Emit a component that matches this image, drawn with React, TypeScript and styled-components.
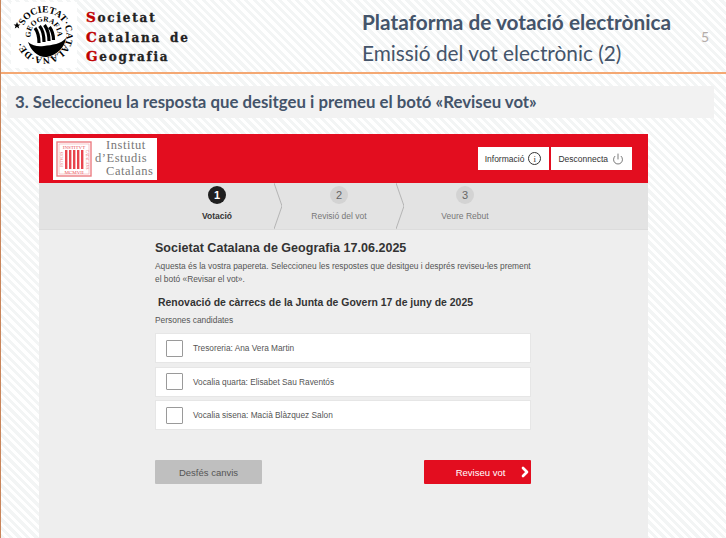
import React from 'react'
import styled, { createGlobalStyle } from 'styled-components'
import { Power, ChevronRight } from 'lucide-react'

const red = '#e30d1f'
const slate = '#44546a'

const GlobalStyle = createGlobalStyle`
    html, body {
        margin: 0;
        padding: 0;
        background: #fff;
    }
`

const Slide = styled.div`
    width: 726px;
    height: 538px;
    box-sizing: border-box;
    overflow: hidden;
    border-left: 1px solid #c9855a;
    background: repeating-linear-gradient(45deg, #f3f5f5 0, #f3f5f5 3px, #fff 3px, #fff 6px);
    font-family: 'Liberation Sans', Arial, sans-serif;
`

const Header = styled.header`
    display: flex;
    height: 74px;
    box-sizing: border-box;
    border-bottom: 2px solid #f4a873;
    padding: 2px 0 0 10px;
`

const Brand = styled.div`
    display: flex;
    width: 351px;
    flex: none;
`

const Emblem = styled.svg`
    width: 66px;
    height: 66px;
    flex: none;
    background: #fff;
`

const BrandName = styled.div`
    margin: 7px 0 0 9px;
    font-family: 'DejaVu Serif', serif;
    font-weight: 700;
    font-size: 12px;
    line-height: 19.5px;
    letter-spacing: 1.8px;
    word-spacing: 3px;
    color: #222;
    -webkit-text-stroke: 0.3px #222;

    b {
        color: #c00000;
        font-size: 13.5px;
        line-height: 0;
        -webkit-text-stroke: 0.4px #c00000;
    }
`

const Titles = styled.div`
    font-family: Lato, sans-serif;
    color: ${slate};
    padding-top: 6px;
    width: 339px;
    flex: none;
`

const MainTitle = styled.div`
    font-size: 20.8px;
    font-weight: 700;
    line-height: 27px;
`

const SubTitle = styled.div`
    margin-top: 3px;
    font-size: 20.8px;
    line-height: 30px;
`

const PageNumber = styled.div`
    font-family: Lato, sans-serif;
    font-size: 14px;
    line-height: 17px;
    color: #b3aca8;
    padding-top: 26px;
`

const Instruction = styled.div`
    margin: 12px 12px 0 6px;
    height: 32px;
    padding-left: 8px;
    background: #f2f2f2;
    font-family: Lato, sans-serif;
    font-weight: 700;
    font-size: 16.8px;
    line-height: 32px;
    color: ${slate};
`

const Shot = styled.section`
    margin: 16px 0 0 38px;
    width: 609px;
    height: 404px;
    background: #eee;
`

const TopBar = styled.div`
    display: flex;
    align-items: center;
    justify-content: space-between;
    height: 49px;
    padding: 0 16px 0 14px;
    background: ${red};
`

const Logo = styled.div`
    display: flex;
    align-items: center;
    width: 104px;
    height: 42px;
    box-sizing: border-box;
    padding-left: 3px;
    background: #fff;
`

const LogoText = styled.div`
    margin-left: 3px;
    font-family: 'Liberation Serif', serif;
    font-size: 12.5px;
    line-height: 13px;
    letter-spacing: 0.55px;
    color: #777;
`

const LogoLine = styled.div<{ $indent: number }>`
    padding-left: ${p => p.$indent}px;
`

const TopActions = styled.div`
    display: flex;
    gap: 2px;
`

const TopButton = styled.div`
    display: flex;
    align-items: center;
    gap: 4px;
    height: 23px;
    padding: 0 8px 0 7px;
    background: #fff;
    font-size: 8.5px;
    color: #333;
`

const InfoIcon = styled.span`
    display: flex;
    align-items: center;
    justify-content: center;
    width: 11px;
    height: 11px;
    border: 1px solid #333;
    border-radius: 50%;
    font-family: 'Liberation Serif', serif;
    font-size: 9px;
`

const Steps = styled.div`
    display: flex;
    height: 46px;
    padding-left: 117px;
    background: #e3e3e3;
    border-bottom: 1px solid #dcdcdc;
`

const Step = styled.div<{ $width: number; $active?: boolean }>`
    position: relative;
    display: flex;
    flex-direction: column;
    align-items: center;
    width: ${p => p.$width}px;
    padding-top: 3px;
    font-size: 8.5px;
    font-weight: ${p => (p.$active ? 700 : 400)};
    color: ${p => (p.$active ? '#333' : '#777')};
`

const StepNumber = styled.div<{ $active?: boolean }>`
    display: flex;
    align-items: center;
    justify-content: center;
    width: 18px;
    height: 18px;
    margin-bottom: 7px;
    border-radius: 50%;
    font-size: 11px;
    font-weight: ${p => (p.$active ? 700 : 400)};
    background: ${p => (p.$active ? '#1f1f1f' : '#d3d3d3')};
    color: ${p => (p.$active ? '#fff' : '#666')};
`

const StepArrow = styled.svg`
    position: absolute;
    top: 0;
    right: -4px;
    width: 8px;
    height: 46px;
`

const Ballot = styled.div`
    width: 376px;
    margin: 0 0 0 116px;
    padding-top: 10px;
    color: #555;
`

const BallotTitle = styled.h1`
    margin: 0;
    font-size: 12.5px;
    line-height: 16px;
    font-weight: 700;
    letter-spacing: 0.03px;
    color: #333;
`

const Intro = styled.p`
    margin: 4px 0 0;
    font-size: 8.4px;
    line-height: 13px;
`

const Question = styled.h2`
    margin: 10px 0 0 3px;
    font-size: 10.45px;
    line-height: 14px;
    font-weight: 700;
    color: #333;
`

const Candidates = styled.div`
    margin-top: 4px;
    font-size: 8.4px;
    line-height: 12px;
`

const CandidateList = styled.div`
    display: flex;
    flex-direction: column;
    gap: 3.5px;
    margin-top: 7px;
`

const Candidate = styled.label`
    display: flex;
    align-items: center;
    gap: 10px;
    height: 30px;
    box-sizing: border-box;
    padding-left: 10px;
    background: #fff;
    border: 1px solid #e6e6e6;
    font-size: 8.3px;
    color: #555;
`

const Box = styled.span`
    width: 15px;
    height: 15px;
    border: 1px solid #9a9a9a;
    border-radius: 1px;
`

const Actions = styled.div`
    display: flex;
    justify-content: space-between;
    margin-top: 30px;
`

const ActionButton = styled.div<{ $primary?: boolean }>`
    position: relative;
    display: flex;
    align-items: center;
    justify-content: center;
    width: 107px;
    height: 24px;
    box-sizing: border-box;
    padding-left: ${p => (p.$primary ? 6 : 0)}px;
    border-radius: 1px;
    font-size: 9.5px;
    background: ${p => (p.$primary ? red : '#bfbfbf')};
    color: ${p => (p.$primary ? '#fff' : '#555')};
`

const ButtonChevron = styled(ChevronRight)`
    position: absolute;
    right: -1.5px;
    top: 4px;
`

const SocietyEmblem = () => (
    <Emblem viewBox="0 0 66 66">
        <defs>
            <path id="outer" d="M 12.6 23.5 A 22.5 22.5 0 1 1 11.3 38.8" />
            <path id="inner" d="M 19.7 35.3 A 13.5 13.5 0 1 1 46.3 35.3" />
        </defs>
        <text fontFamily="Liberation Serif" fontSize="9.6" fontWeight="700" fill="#000">
            <textPath href="#outer" textLength="124" lengthAdjust="spacingAndGlyphs">
                SOCIETAT·CATALANA·DE·
            </textPath>
        </text>
        <text fontFamily="Liberation Serif" fontSize="7.4" fontWeight="700" fill="#000">
            <textPath href="#inner" textLength="46" lengthAdjust="spacingAndGlyphs">
                GEOGRAFIA
            </textPath>
        </text>
        <path d="M17 40 C22 44 27 45 33 44 C41 43 50 42 55 36 C54 45 46 53 36 55 C28 56 20 49 17 40 Z" fill="#000" />
        <path
            d="M24 26 C27 30 28 35 28 41 M28.5 24 C32 28 33 34 33 40 M33.5 23 C37 28 38 33 38 39 M38.5 25 C41.5 29 42.5 33 42.5 38"
            stroke="#000"
            strokeWidth="3.2"
            fill="none"
        />
        <path d="M6 20 l1 2.4 2.4 .2 -1.9 1.5 .7 2.4 -2.2 -1.4 -2.2 1.4 .7 -2.4 -1.9 -1.5 2.4 -.2 Z" fill="#000" />
    </Emblem>
)

const InstitutSeal = () => (
    <svg width="36" height="36" viewBox="0 0 36 36">
        <rect x="1" y="1" width="34" height="34" fill="#fff" stroke="#ec7c82" strokeWidth="1.4" />
        <rect x="3" y="3" width="30" height="30" fill="none" stroke="#f2a6a8" strokeWidth="0.6" />
        <text x="18" y="8" textAnchor="middle" fontSize="5" fontFamily="Liberation Serif" fill="#e9565e">
            INSTITVT
        </text>
        <text x="18" y="32.5" textAnchor="middle" fontSize="5" fontFamily="Liberation Serif" fill="#e9565e">
            MCMVII
        </text>
        {[9, 13, 17, 21, 25].map(x => (
            <rect key={x} x={x} y="9" width="2.4" height="19" fill="#e8444d" />
        ))}
        <text x="6.5" y="18.5" textAnchor="middle" fontSize="3.8" fontFamily="Liberation Serif" fill="#e9565e" transform="rotate(-90 6.5 18.5)">
            ESTVDIS
        </text>
        <text x="29.5" y="18.5" textAnchor="middle" fontSize="3.8" fontFamily="Liberation Serif" fill="#e9565e" transform="rotate(90 29.5 18.5)">
            CATALANS
        </text>
    </svg>
)

const steps = [
    { n: 1, label: 'Votació', width: 122, active: true },
    { n: 2, label: 'Revisió del vot', width: 122 },
    { n: 3, label: 'Veure Rebut', width: 130, last: true },
]

const candidates = ['Tresoreria: Ana Vera Martin', 'Vocalia quarta: Elisabet Sau Raventós', 'Vocalia sisena: Macià Blàzquez Salon']

export default function App() {
    return (
        <>
            <GlobalStyle />
            <Slide>
                <Header>
                    <Brand>
                        <SocietyEmblem />
                        <BrandName>
                            <div>
                                <b>S</b>ocietat
                            </div>
                            <div>
                                <b>C</b>atalana de
                            </div>
                            <div>
                                <b>G</b>eografia
                            </div>
                        </BrandName>
                    </Brand>
                    <Titles>
                        <MainTitle>Plataforma de votació electrònica</MainTitle>
                        <SubTitle>Emissió del vot electrònic (2)</SubTitle>
                    </Titles>
                    <PageNumber>5</PageNumber>
                </Header>
                <Instruction>3. Seleccioneu la resposta que desitgeu i premeu el botó «Reviseu vot»</Instruction>
                <Shot>
                    <TopBar>
                        <Logo>
                            <InstitutSeal />
                            <LogoText>
                                <LogoLine $indent={11}>Institut</LogoLine>
                                <LogoLine $indent={0}>d’Estudis</LogoLine>
                                <LogoLine $indent={11}>Catalans</LogoLine>
                            </LogoText>
                        </Logo>
                        <TopActions>
                            <TopButton>
                                Informació <InfoIcon>i</InfoIcon>
                            </TopButton>
                            <TopButton>
                                Desconnecta <Power size={12} strokeWidth={1.2} color="#222" />
                            </TopButton>
                        </TopActions>
                    </TopBar>
                    <Steps>
                        {steps.map(step => (
                            <Step key={step.n} $width={step.width} $active={step.active}>
                                <StepNumber $active={step.active}>{step.n}</StepNumber>
                                {step.label}
                                {!step.last && (
                                    <StepArrow viewBox="0 0 8 46">
                                        <path d="M0 0 L8 23 L0 46" fill="none" stroke="#a8a8a8" strokeWidth="0.8" />
                                    </StepArrow>
                                )}
                            </Step>
                        ))}
                    </Steps>
                    <Ballot>
                        <BallotTitle>Societat Catalana de Geografia 17.06.2025</BallotTitle>
                        <Intro>
                            Aquesta és la vostra papereta. Seleccioneu les respostes que desitgeu i després reviseu-les
                            prement el botó «Revisar el vot».
                        </Intro>
                        <Question>Renovació de càrrecs de la Junta de Govern 17 de juny de 2025</Question>
                        <Candidates>Persones candidates</Candidates>
                        <CandidateList>
                            {candidates.map(name => (
                                <Candidate key={name}>
                                    <Box />
                                    {name}
                                </Candidate>
                            ))}
                        </CandidateList>
                        <Actions>
                            <ActionButton>Desfés canvis</ActionButton>
                            <ActionButton $primary>
                                Reviseu vot
                                <ButtonChevron size={16} strokeWidth={4} color="#fff" />
                            </ActionButton>
                        </Actions>
                    </Ballot>
                </Shot>
            </Slide>
        </>
    )
}
